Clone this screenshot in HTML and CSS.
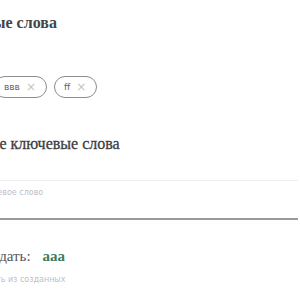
FILE: index.html
```html
<!DOCTYPE html>
<html lang="ru">
<head>
<meta charset="utf-8">
<link rel="stylesheet" href="styles.css">
</head>
<body>
<div class="panel">
  <h2 class="title">Ключевые слова</h2>
  <div class="chips">
    <span class="chip">ввв <span class="x">×</span></span>
    <span class="chip">ff <span class="x">×</span></span>
  </div>
  <h3 class="subtitle">Добавьте ключевые слова</h3>
  <div class="field">
    <input class="input" type="text" placeholder="Ключевое слово">
  </div>
  <div class="create">Создать: <b class="val">aaa</b></div>
  <div class="hint">или выбрать из созданных</div>
</div>
</body>
</html>
```
FILE: styles.css
```css
html, body { margin: 0; padding: 0; background: #fff; }
.panel {
  margin-right: 2px;
  padding-top: 13px;
  font-family: "Liberation Serif", serif;
  color: #444;
}
.title {
  margin: 0 0 0 -64px;
  font-size: 16px;
  font-weight: 700;
  line-height: 20px;
  color: #444;
}
.chips {
  display: flex;
  gap: 7px;
  margin: 43px 0 0 -6px;
}
.chip {
  display: inline-flex;
  align-items: center;
  gap: 6px;
  height: 20px;
  padding: 0 10px 0 9px;
  border: 1.5px solid #8c8c8c;
  border-radius: 12px;
  font-family: "DejaVu Sans", sans-serif;
  font-size: 9px;
  color: #666;
}
.x { font-size: 12px; color: #c4c4c4; }
.subtitle {
  margin: 36px 0 0 -56px;
  font-size: 16px;
  font-weight: 400;
  line-height: 20px;
  color: #3d3d3d;
  -webkit-text-stroke: 0.3px #3d3d3d;
}
.field {
  margin-top: 26px;
  margin-left: -25px;
  border-top: 1px solid #eeeeee;
  border-bottom: 2px solid #9a9a9a;
  height: 37px;
}
.input {
  border: 0;
  outline: 0;
  padding: 3px 0 0;
  width: 100%;
  font-family: "DejaVu Sans", sans-serif;
  font-size: 8px;
  color: #444;
}
.input::placeholder { color: #bcc0cc; }
.create {
  margin: 27px 0 0 -24px;
  font-size: 15px;
  line-height: 18px;
  color: #555;
}
.val { color: #3d7a5c; margin-left: 8px; }
.hint {
  margin: 10px 0 0 -48px;
  font-family: "DejaVu Sans", sans-serif;
  font-size: 8px;
  line-height: 10px;
  color: #bcc0cc;
}
```
